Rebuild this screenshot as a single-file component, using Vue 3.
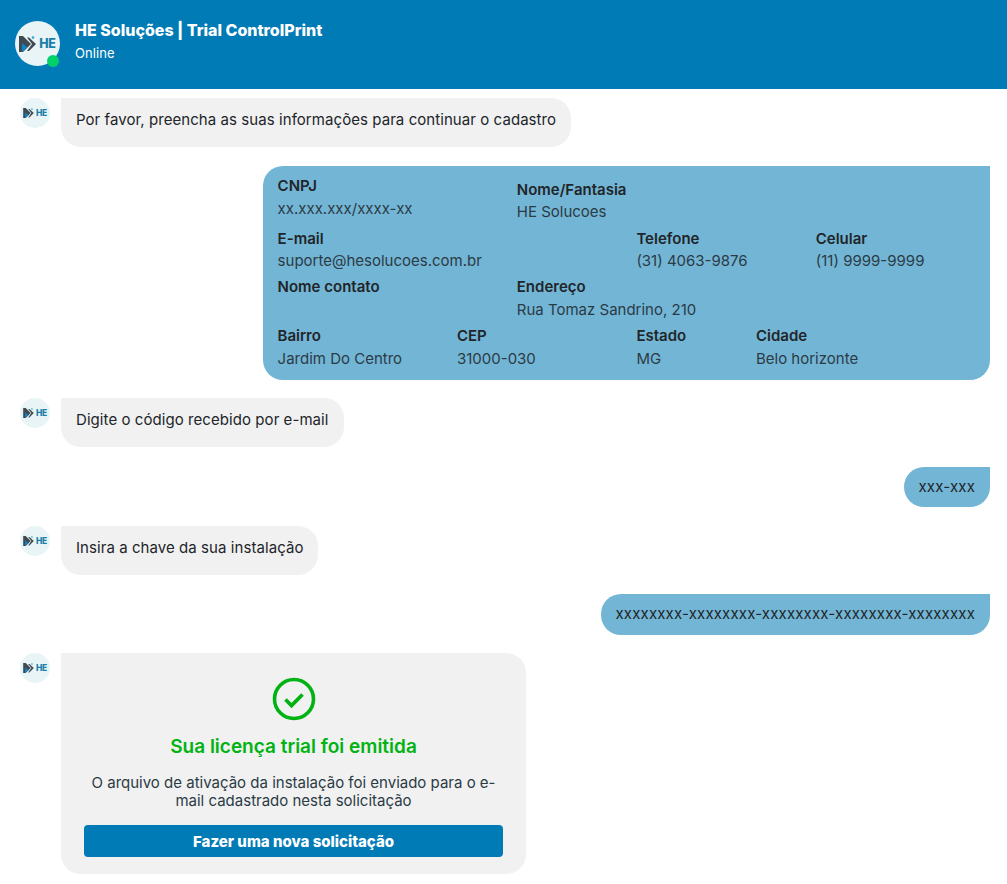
<script setup>
const fields = [
  { label: 'CNPJ', value: 'xx.xxx.xxx/xxxx-xx', col: 'span 4', cls: 'f-a' },
  { label: 'Nome/Fantasia', value: 'HE Solucoes', col: 'span 8', cls: 'f-b' },
  { label: 'E-mail', value: 'suporte@hesolucoes.com.br', col: 'span 6', cls: 'f-c' },
  { label: 'Telefone', value: '(31) 4063-9876', col: 'span 3', cls: 'f-c' },
  { label: 'Celular', value: '(11) 9999-9999', col: 'span 3', cls: 'f-c' },
  { label: 'Nome contato', value: '', col: 'span 4', cls: 'f-d' },
  { label: 'Endereço', value: 'Rua Tomaz Sandrino, 210', col: 'span 8', cls: 'f-d' },
  { label: 'Bairro', value: 'Jardim Do Centro', col: 'span 3', cls: 'f-e' },
  { label: 'CEP', value: '31000-030', col: 'span 3', cls: 'f-e' },
  { label: 'Estado', value: 'MG', col: 'span 2', cls: 'f-e' },
  { label: 'Cidade', value: 'Belo horizonte', col: 'span 4', cls: 'f-e' }
]
</script>

<template>
  <div class="page">
    <header class="header">
      <div class="avatar-big">
        <svg class="mark" viewBox="0 0 17 16"><path d="M0 0h4l8 8-8 8H0z" fill="#3f4a52"/><path d="M3 7l5.5 4.5L3 16z" fill="#0a86c4"/><path d="M8 1.5h2L17 8l-7 7H8l5-7z" fill="#3f4a52"/><circle cx="14" cy="1.5" r="1.3" fill="#2aa7c9"/></svg>
        <span class="he">HE</span>
        <span class="dot"></span>
      </div>
      <div class="head-text">
        <div class="title">HE Soluções | Trial ControlPrint</div>
        <div class="status">Online</div>
      </div>
    </header>

    <main class="chat">
      <div class="row">
        <div class="avatar">
          <svg class="mark" viewBox="0 0 17 16"><path d="M0 0h4l8 8-8 8H0z" fill="#3f4a52"/><path d="M3 7l5.5 4.5L3 16z" fill="#0a86c4"/><path d="M8 1.5h2L17 8l-7 7H8l5-7z" fill="#3f4a52"/><circle cx="14" cy="1.5" r="1.3" fill="#2aa7c9"/></svg>
          <span class="he">HE</span>
        </div>
        <div class="bubble in">Por favor, preencha as suas informações para continuar o cadastro</div>
      </div>

      <div class="row right tight">
        <div class="bubble out card">
          <div class="grid">
            <div v-for="f in fields" :key="f.label" class="field" :class="f.cls" :style="{ gridColumn: f.col }">
              <div class="label">{{ f.label }}</div>
              <div class="value">{{ f.value }}</div>
            </div>
          </div>
        </div>
      </div>

      <div class="row loose">
        <div class="avatar">
          <svg class="mark" viewBox="0 0 17 16"><path d="M0 0h4l8 8-8 8H0z" fill="#3f4a52"/><path d="M3 7l5.5 4.5L3 16z" fill="#0a86c4"/><path d="M8 1.5h2L17 8l-7 7H8l5-7z" fill="#3f4a52"/><circle cx="14" cy="1.5" r="1.3" fill="#2aa7c9"/></svg>
          <span class="he">HE</span>
        </div>
        <div class="bubble in">Digite o código recebido por e-mail</div>
      </div>

      <div class="row right"><div class="bubble out">xxx-xxx</div></div>

      <div class="row">
        <div class="avatar">
          <svg class="mark" viewBox="0 0 17 16"><path d="M0 0h4l8 8-8 8H0z" fill="#3f4a52"/><path d="M3 7l5.5 4.5L3 16z" fill="#0a86c4"/><path d="M8 1.5h2L17 8l-7 7H8l5-7z" fill="#3f4a52"/><circle cx="14" cy="1.5" r="1.3" fill="#2aa7c9"/></svg>
          <span class="he">HE</span>
        </div>
        <div class="bubble in">Insira a chave da sua instalação</div>
      </div>

      <div class="row right tight"><div class="bubble out long">xxxxxxxx-xxxxxxxx-xxxxxxxx-xxxxxxxx-xxxxxxxx</div></div>

      <div class="row">
        <div class="avatar">
          <svg class="mark" viewBox="0 0 17 16"><path d="M0 0h4l8 8-8 8H0z" fill="#3f4a52"/><path d="M3 7l5.5 4.5L3 16z" fill="#0a86c4"/><path d="M8 1.5h2L17 8l-7 7H8l5-7z" fill="#3f4a52"/><circle cx="14" cy="1.5" r="1.3" fill="#2aa7c9"/></svg>
          <span class="he">HE</span>
        </div>
        <div class="bubble in done">
          <svg class="check" viewBox="0 0 44 44">
            <circle cx="22" cy="22" r="19.5" fill="none" stroke="#00b312" stroke-width="3.6"/>
            <path d="M13.5 22.5l6 6 11-11" fill="none" stroke="#00b312" stroke-width="3.8"/>
          </svg>
          <div class="done-title">Sua licença trial foi emitida</div>
          <p class="done-text">O arquivo de ativação da instalação foi enviado para o e-mail cadastrado nesta solicitação</p>
          <button class="btn">Fazer uma nova solicitação</button>
        </div>
      </div>
    </main>
  </div>
</template>

<style>
html, body { margin: 0; background: #fff; }
</style>

<style scoped>
.page {
  font-family: Inter, "Liberation Sans", sans-serif;
  font-size: 15px;
  color: #212529;
  width: 1007px;
  height: 884px;
  overflow: hidden;
}
.header {
  height: 89px;
  box-sizing: border-box;
  background: #007bb5;
  color: #fff;
  display: flex;
  align-items: flex-start;
  gap: 15px;
  padding: 21px 15px 0;
}
.avatar-big {
  position: relative;
  width: 45px;
  height: 45px;
  border-radius: 50%;
  background: #e9f4f7;
  display: flex;
  align-items: center;
  justify-content: center;
  gap: 3px;
}
.avatar-big .mark { width: 17px; height: 16px; }
.avatar-big .he { font-size: 12.5px; font-weight: 800; color: #1b7fa8; letter-spacing: -0.3px; }
.dot {
  position: absolute;
  right: 1px;
  bottom: -1px;
  width: 12px;
  height: 12px;
  border-radius: 50%;
  background: #00d26a;
}
.head-text { margin-top: -1px; }
.title { font-size: 16px; font-weight: 800; line-height: 20px; }
.status { font-size: 13px; line-height: 20px; margin-top: 3px; letter-spacing: 0.1px; }
.chat {
  display: flex;
  flex-direction: column;
  gap: 19px;
  padding: 9px 17px 0 20px;
}
.row { display: flex; align-items: flex-start; gap: 11px; }
.row.right { justify-content: flex-end; }
.row.tight { margin-bottom: -1px; }
.row.loose { margin-bottom: 1px; }
.avatar {
  flex: none;
  width: 30px;
  height: 30px;
  border-radius: 50%;
  background: #e9f4f7;
  display: flex;
  align-items: center;
  justify-content: center;
  gap: 2px;
}
.avatar .mark { width: 11px; height: 10px; }
.avatar .he { font-size: 8.5px; font-weight: 800; color: #1b7fa8; letter-spacing: -0.2px; }
.bubble { line-height: 19px; letter-spacing: 0.065px; }
.in { background: #f1f1f1; border-radius: 0 20px 20px 20px; padding: 12px 15px 18px; }
.out {
  background: #73b5d5;
  border-radius: 20px 0 20px 20px;
  padding: 10px 15px 11px;
  letter-spacing: 0.16px;
}
.long { padding-bottom: 12px; }
.card { width: 727px; box-sizing: border-box; padding: 9px 0 10px 14.6px; letter-spacing: 0; }
.grid { display: grid; grid-template-columns: repeat(12, 59.8px); }
.label { font-weight: 600; line-height: 22px; }
.value { line-height: 22px; color: #2b3b45; }
.f-a { height: 53px; }
.f-a .value { margin-top: 1px; }
.f-b { height: 53px; box-sizing: border-box; padding-top: 4px; }
.f-c { height: 48px; }
.f-d { height: 49px; }
.f-d .value { margin-top: 1px; }
.f-e { height: 45px; }
.f-e .value { margin-top: 1px; }
.done { width: 465px; box-sizing: border-box; padding: 24px 23px 17px; text-align: center; letter-spacing: 0; }
.check { display: block; width: 44px; height: 44px; margin: 0 auto; }
.done-title { color: #00b312; font-size: 19px; font-weight: 600; line-height: 24px; margin-top: 14px; }
.done-text { margin: 15px 0 0; line-height: 18px; color: #2b3b45; }
.btn {
  display: block;
  width: 100%;
  height: 32px;
  margin-top: 15px;
  border: 0;
  border-radius: 4px;
  background: #007bb5;
  color: #fff;
  font: 800 15px Inter, sans-serif;
}
</style>
